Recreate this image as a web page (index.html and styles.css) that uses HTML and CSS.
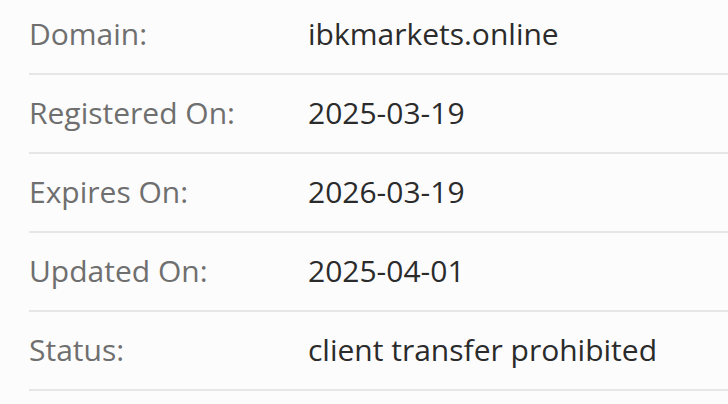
FILE: index.html
```html
<!DOCTYPE html>
<html lang="en">
<head>
<meta charset="utf-8">
<title>Domain info</title>
<link rel="stylesheet" href="styles.css">
</head>
<body>
<div class="info">
  <div class="row"><div class="label">Domain:</div><div class="value">ibkmarkets.online</div></div>
  <div class="row"><div class="label">Registered On:</div><div class="value">2025-03-19</div></div>
  <div class="row"><div class="label">Expires On:</div><div class="value">2026-03-19</div></div>
  <div class="row"><div class="label">Updated On:</div><div class="value">2025-04-01</div></div>
  <div class="row"><div class="label">Status:</div><div class="value">client transfer prohibited</div></div>
</div>
</body>
</html>
```
FILE: styles.css
```css
html, body {
  margin: 0;
  padding: 0;
  background: #fcfcfc;
}
body {
  font-family: "Open Sans", "Liberation Sans", sans-serif;
  font-size: 30px;
  line-height: 40px;
  overflow: hidden;
}
.info {
  margin-top: -4px;
  margin-left: 29px;
}
.row {
  display: grid;
  grid-template-columns: 279px 1fr;
  padding: 18px 0 19px;
  border-bottom: 2px solid #e6e6e6;
}
.label {
  color: #6f6f6f;
}
.value {
  color: #2b2b2b;
  white-space: nowrap;
}
```
